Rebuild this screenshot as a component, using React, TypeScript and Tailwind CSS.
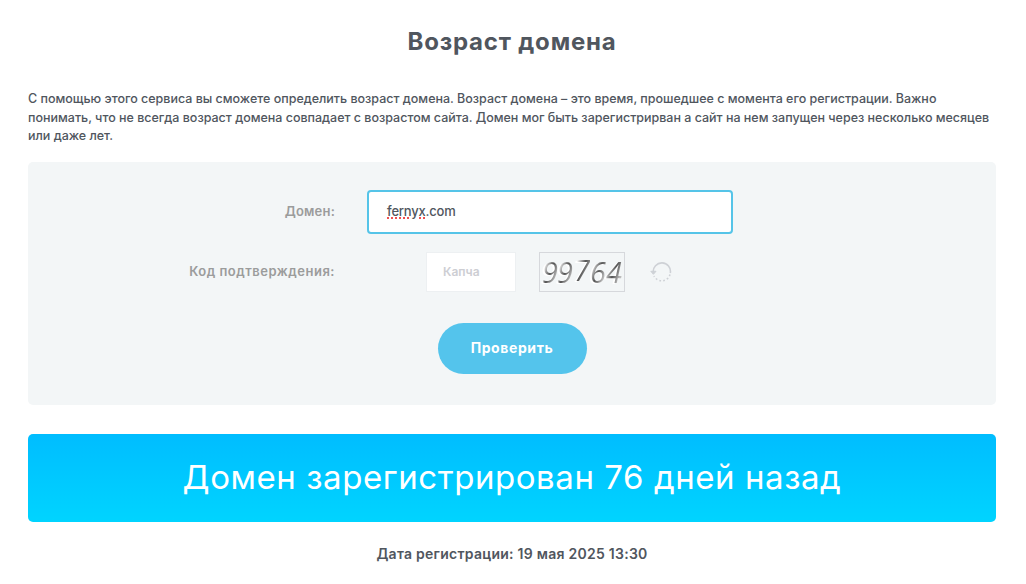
import type { ReactNode } from "react";

const description = [
  "С помощью этого сервиса вы сможете определить возраст домена. Возраст домена – это время, прошедшее с момента его регистрации. Важно",
  "понимать, что не всегда возраст домена совпадает с возрастом сайта. Домен мог быть зарегистрирван а сайт на нем запущен через несколько месяцев",
  "или даже лет.",
];

const captchaDigits = [
  { digit: "9", className: "" },
  { digit: "9", className: "-translate-x-px" },
  { digit: "7", className: "translate-y-[-2px]" },
  { digit: "6", className: "" },
  { digit: "4", className: "" },
];

function FieldLabel({ children }: { children: ReactNode }) {
  return (
    <div className="w-[307px] shrink-0 pt-px text-right text-[13px] font-semibold text-[#9b9c9c]">
      {children}
    </div>
  );
}

function Captcha() {
  return (
    <div className="flex h-10 w-[86px] items-center justify-center border border-[#d6d8dc] bg-[#f3f6f7] font-['Open_Sans',sans-serif] text-[29px] leading-[38px] font-normal italic">
      {captchaDigits.map(({ digit, className }, i) => (
        <span
          key={i}
          className={`bg-linear-to-br from-[#eee] from-25% via-[#555] via-50% to-[#bbb] to-75% bg-clip-text text-transparent drop-shadow-[-2px_1px_0_#fff] ${className}`}
        >
          {digit}
        </span>
      ))}
    </div>
  );
}

function RefreshIcon() {
  return (
    <svg width="22" height="20" viewBox="0 0 22 20" fill="none" stroke="#ced1d6">
      <path d="M3.3 10.5A8.6 8.6 0 1 1 20.3 11" strokeWidth="1.6" />
      <path d="M20 12.5A8.6 8.6 0 0 1 4 14" strokeWidth="1.6" strokeDasharray="1.7 2.2" />
      <path d="M0.8 9.3H6L3.4 12.3Z" fill="#ced1d6" />
    </svg>
  );
}

export default function App() {
  return (
    <main className="h-[584px] w-[1026px] overflow-hidden bg-white px-[28px] font-['Inter',sans-serif] text-[#50565e]">
      <h1 className="w-[968px] pt-[26px] text-center text-[24px] leading-8 font-bold tracking-[0.8px]">
        Возраст домена
      </h1>

      <div className="mt-8 text-[12.5px] leading-[18.5px] font-medium tracking-[-0.01px] whitespace-nowrap">
        {description.map((line) => (
          <p key={line}>{line}</p>
        ))}
      </div>

      <section className="mt-4 h-[243px] w-[968px] rounded-[5px] bg-[#f3f6f7] pt-7">
        <div className="flex items-center">
          <FieldLabel>
            <span className="tracking-[0.2px]">Домен:</span>
          </FieldLabel>
          <div className="ml-8 flex h-11 w-[366px] items-center rounded-[4px] border-2 border-[#55c4e8] bg-white px-[18px] text-[13px] font-medium tracking-[-0.2px]">
            <span className="underline decoration-[#f05050] decoration-dotted decoration-2 underline-offset-2">
              fernyx
            </span>
            .com
          </div>
        </div>

        <div className="mt-[18px] flex items-center">
          <FieldLabel>
            <span className="tracking-[0.5px]">Код подтверждения:</span>
          </FieldLabel>
          <div className="ml-[91px] flex h-10 w-[90px] items-center border border-[#edf0f2] bg-white px-4 text-[12px] font-semibold text-[#cdced3]">
            Капча
          </div>
          <div className="ml-[23px]">
            <Captcha />
          </div>
          <div className="ml-[25px]">
            <RefreshIcon />
          </div>
        </div>

        <button className="mx-auto mt-[31px] block h-[51px] w-[149px] rounded-full bg-[#54c4ec] pb-0.5 text-[14px] font-bold tracking-[0.6px] text-white">
          Проверить
        </button>
      </section>

      <div className="mt-[29px] flex h-[88px] w-[968px] items-center justify-center rounded-[5px] bg-linear-to-b from-[#00bdff] to-[#00d4ff] pt-px text-[33px] tracking-[0.56px] text-white">
        <span className="whitespace-nowrap">Домен зарегистрирован 76 дней назад</span>
      </div>

      <p className="mt-[22px] w-[968px] text-center text-[14px] leading-5 font-semibold tracking-[0.26px]">
        Дата регистрации: 19 мая 2025 13:30
      </p>
    </main>
  );
}
